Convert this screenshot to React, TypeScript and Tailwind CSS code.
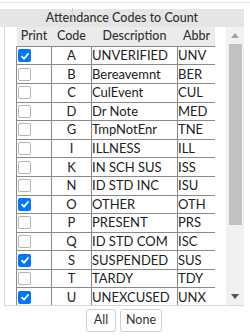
import type {ReactNode} from "react";

interface Code {
    code: string;
    desc: string;
    abbr: string;
    checked?: boolean;
}

const codes: Code[] = [
    {code: "A", desc: "UNVERIFIED", abbr: "UNV", checked: true},
    {code: "B", desc: "Bereavemnt", abbr: "BER"},
    {code: "C", desc: "CulEvent", abbr: "CUL"},
    {code: "D", desc: "Dr Note", abbr: "MED"},
    {code: "G", desc: "TmpNotEnr", abbr: "TNE"},
    {code: "I", desc: "ILLNESS", abbr: "ILL"},
    {code: "K", desc: "IN SCH SUS", abbr: "ISS"},
    {code: "N", desc: "ID STD INC", abbr: "ISU"},
    {code: "O", desc: "OTHER", abbr: "OTH", checked: true},
    {code: "P", desc: "PRESENT", abbr: "PRS"},
    {code: "Q", desc: "ID STD COM", abbr: "ISC"},
    {code: "S", desc: "SUSPENDED", abbr: "SUS", checked: true},
    {code: "T", desc: "TARDY", abbr: "TDY"},
    {code: "U", desc: "UNEXCUSED", abbr: "UNX", checked: true},
];

function Check({checked}: {checked?: boolean}) {
    if (checked) {
        return (
            <span className="flex w-[13px] h-[13px] rounded-[2px] bg-[#0075ff] items-center justify-center">
                <svg width="10" height="10" viewBox="0 0 10 10">
                    <path d="M1.5 5.2 L4 7.6 L8.6 2.4" fill="none" stroke="white" strokeWidth="1.8"/>
                </svg>
            </span>
        );
    }
    return <span className="block w-[13px] h-[13px] rounded-[2px] border border-[#b5b5b5] bg-white"/>;
}

function Th({children}: {children: ReactNode}) {
    return (
        <th className="h-[19px] p-0 bg-[#ebebeb] font-medium text-[12.5px] text-[#333] text-center border-b border-[#8a8a8a]">
            {children}
        </th>
    );
}

export default function App() {
    return (
        <div className="relative w-[250px] h-[336px] bg-white text-[#222]"
             style={{fontFamily: "Lato, 'Open Sans', sans-serif"}}>
            <div className="h-px mt-[2px] bg-[#e2e2e2]"/>
            <div className="mt-[6px] w-[244px] h-[18px] bg-[#e5e5e5] flex items-center justify-center text-[12.5px] text-[#333] font-medium">
                Attendance Codes to Count
            </div>
            <div className="absolute left-[72px] top-[6px] w-px h-[15px] bg-[#d0d0d0]"/>

            <div className="flex h-[279px] ml-[4px] border-l border-b border-[#d8d8d8]" style={{width: 240}}>
                <div className="w-[11px]"/>
                <div className="w-[199px] overflow-hidden">
                    <table className="w-[199px] border-collapse table-fixed">
                        <colgroup>
                            <col className="w-[35px]"/>
                            <col className="w-[40px]"/>
                            <col className="w-[86px]"/>
                            <col className="w-[38px]"/>
                        </colgroup>
                        <thead>
                        <tr>
                            <Th>Print</Th>
                            <Th>Code</Th>
                            <Th>Description</Th>
                            <Th>Abbr</Th>
                        </tr>
                        </thead>
                        <tbody>
                        {codes.map((c) => (
                            <tr key={c.code} className="h-[18.6px] text-[13px]">
                                <td className="p-0 pl-[1px] border border-[#8a8a8a]">
                                    <Check checked={c.checked}/>
                                </td>
                                <td className="p-0 border border-[#8a8a8a] text-center leading-none">{c.code}</td>
                                <td className="p-0 border border-[#8a8a8a] leading-none whitespace-nowrap overflow-hidden">{c.desc}</td>
                                <td className="p-0 border border-[#8a8a8a] leading-none">{c.abbr}</td>
                            </tr>
                        ))}
                        </tbody>
                    </table>
                </div>
                <div className="w-[11px]"/>
                <div className="w-[18px] h-full bg-[#f1f1f1] flex flex-col items-center">
                    <div className="h-[17px] flex items-center justify-center">
                        <svg width="8" height="5" viewBox="0 0 8 5">
                            <path d="M0 5 L4 0 L8 5 Z" fill="#a3a3a3"/>
                        </svg>
                    </div>
                    <div className="w-[13px] h-[181px] bg-[#c1c1c1]"/>
                    <div className="flex-1"/>
                    <div className="h-[17px] flex items-center justify-center">
                        <svg width="8" height="5" viewBox="0 0 8 5">
                            <path d="M0 0 L8 0 L4 5 Z" fill="#505050"/>
                        </svg>
                    </div>
                </div>
            </div>

            <div className="flex justify-center gap-[4px] mt-[3px] pr-[2px]">
                <button className="w-[30px] h-[23px] border border-[#cfcfcf] rounded-[3px] bg-white text-[12.5px] text-[#333]">
                    All
                </button>
                <button className="w-[42px] h-[23px] border border-[#cfcfcf] rounded-[3px] bg-white text-[12.5px] text-[#333]">
                    None
                </button>
            </div>
        </div>
    );
}
